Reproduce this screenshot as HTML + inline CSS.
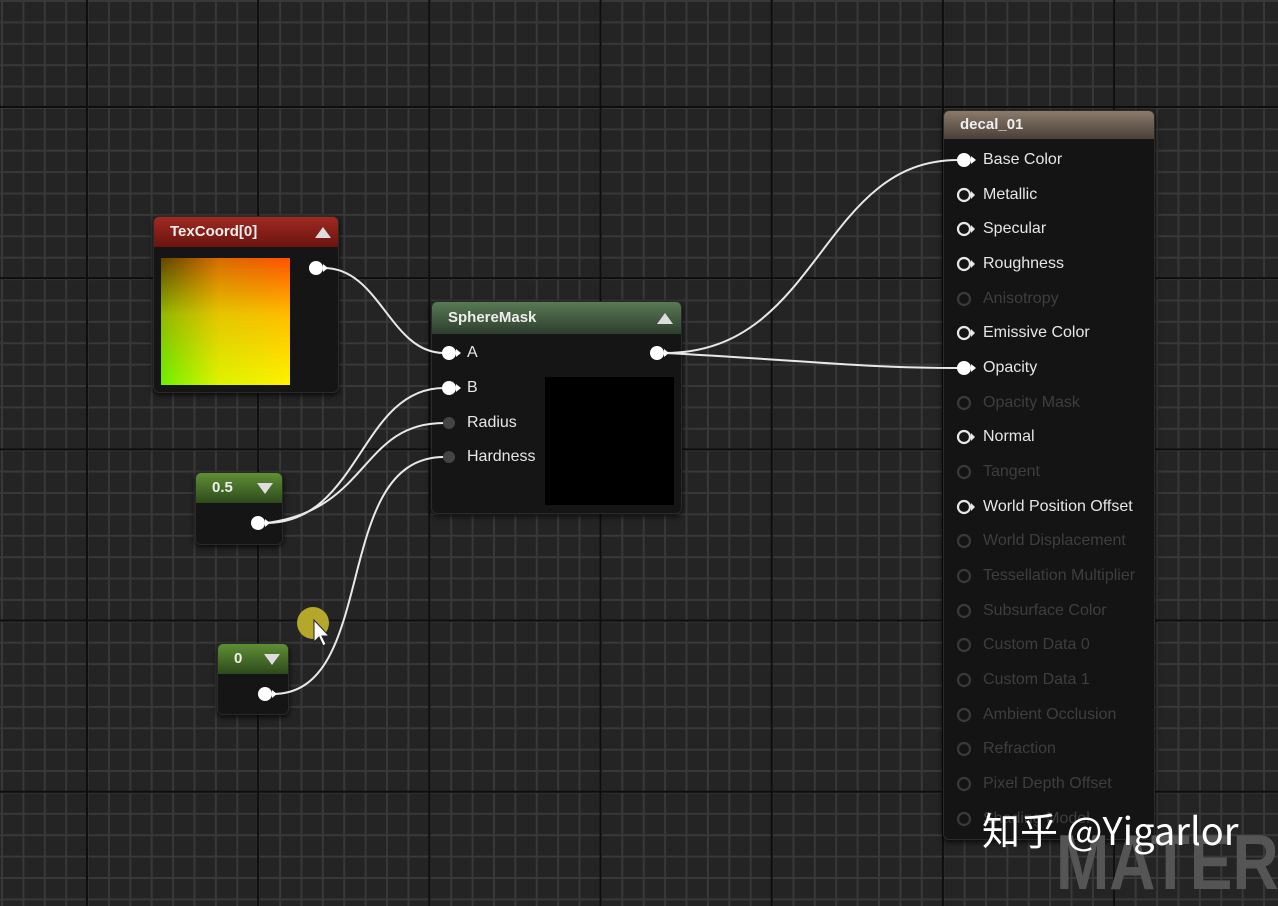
<!DOCTYPE html>
<html><head><meta charset="utf-8"><style>
*{margin:0;padding:0;box-sizing:border-box}
body{width:1278px;height:889px;overflow:hidden;position:relative;font-family:"Liberation Sans","Noto Sans CJK SC",sans-serif;
background-color:#242424;
background-image:
linear-gradient(to right,#0e0e0e 2px,transparent 2px),
linear-gradient(to bottom,#0e0e0e 2px,transparent 2px),
linear-gradient(to right,#383838 2px,transparent 2px),
linear-gradient(to bottom,#383838 2px,transparent 2px);
background-size:171.2px 171.2px,171.2px 171.2px,21.4px 21.4px,21.4px 21.4px;
background-position:86px 0,0 106px,1px 0,0 0px;}
.node{position:absolute;background:#151515;border-radius:6px;box-shadow:0 2px 6px rgba(0,0,0,.8);border:1px solid #2a2a2a}
.hdr{position:absolute;left:0;right:0;top:0;border-radius:5px 5px 0 0;color:#eee;font-weight:bold;font-size:15px;padding-left:16px}
.t{position:absolute;font-size:16px;color:#e6e6e6;line-height:20px;white-space:nowrap}
.d{color:#3e3e3e}
.tri{position:absolute;width:0;height:0;border-left:8px solid transparent;border-right:8px solid transparent}
</style></head><body>

<div class="node" style="left:153px;top:216px;width:186px;height:177px">
 <div class="hdr" style="height:30px;line-height:30px;background:linear-gradient(to bottom,#a02a22,#6a1410)">TexCoord[0]</div>
 <div class="tri" style="left:161px;top:10px;border-bottom:11px solid #ddd"></div>
 <div style="position:absolute;left:7px;top:41px;width:129px;height:127px;background:linear-gradient(to right,#3a1a00 0%,#d04800 45%,#ff2a00 100%),linear-gradient(to bottom,#303000 0%,#70b000 45%,#40f000 100%);background-blend-mode:screen"></div>
</div>

<div class="node" style="left:431px;top:301px;width:251px;height:213px">
 <div class="hdr" style="height:32px;line-height:32px;background:linear-gradient(to bottom,#587a55,#2e3e2d)">SphereMask</div>
 <div class="tri" style="left:225px;top:11px;border-bottom:11px solid #ddd"></div>
 <div style="position:absolute;left:113px;top:75px;width:129px;height:128px;background:#000"></div>
</div>
<div class="t" style="left:467px;top:343px">A</div>
<div class="t" style="left:467px;top:378px">B</div>
<div class="t" style="left:467px;top:413px">Radius</div>
<div class="t" style="left:467px;top:447px">Hardness</div>

<div class="node" style="left:195px;top:472px;width:88px;height:73px">
 <div class="hdr" style="height:30px;line-height:30px;background:linear-gradient(to bottom,#5f8f35,#2e4a1c)">0.5</div>
 <div class="tri" style="left:61px;top:10px;border-top:11px solid #ddd"></div>
</div>
<div class="node" style="left:217px;top:643px;width:72px;height:72px">
 <div class="hdr" style="height:30px;line-height:30px;background:linear-gradient(to bottom,#5f8f35,#2e4a1c)">0</div>
 <div class="tri" style="left:46px;top:10px;border-top:11px solid #ddd"></div>
</div>

<div class="node" style="left:943px;top:110px;width:212px;height:730px;background:#141414">
 <div class="hdr" style="height:28px;line-height:28px;background:linear-gradient(to bottom,#8a7a6a,#4a4038)">decal_01</div>
</div>
<div class="t" style="left:983px;top:150px">Base Color</div>
<div class="t" style="left:983px;top:185px">Metallic</div>
<div class="t" style="left:983px;top:219px">Specular</div>
<div class="t" style="left:983px;top:254px">Roughness</div>
<div class="t d" style="left:983px;top:289px">Anisotropy</div>
<div class="t" style="left:983px;top:323px">Emissive Color</div>
<div class="t" style="left:983px;top:358px">Opacity</div>
<div class="t d" style="left:983px;top:393px">Opacity Mask</div>
<div class="t" style="left:983px;top:427px">Normal</div>
<div class="t d" style="left:983px;top:462px">Tangent</div>
<div class="t" style="left:983px;top:497px">World Position Offset</div>
<div class="t d" style="left:983px;top:531px">World Displacement</div>
<div class="t d" style="left:983px;top:566px">Tessellation Multiplier</div>
<div class="t d" style="left:983px;top:601px">Subsurface Color</div>
<div class="t d" style="left:983px;top:635px">Custom Data 0</div>
<div class="t d" style="left:983px;top:670px">Custom Data 1</div>
<div class="t d" style="left:983px;top:705px">Ambient Occlusion</div>
<div class="t d" style="left:983px;top:739px">Refraction</div>
<div class="t d" style="left:983px;top:774px">Pixel Depth Offset</div>
<div class="t d" style="left:983px;top:809px">Shading Model</div>

<div style="position:absolute;left:1056px;top:822px;font-size:78px;font-weight:bold;color:#555;line-height:80px;white-space:nowrap;transform:scaleX(0.82);transform-origin:left top">MATER</div>

<svg style="position:absolute;left:0;top:0" width="1278" height="889">
<g fill="none" stroke="#e8e8e8" stroke-width="2">
<path d="M324 268 C380 268 390 353 444 353"/>
<path d="M266 523 C360 523 360 388 444 388"/>
<path d="M266 523 C370 510 360 423 444 423"/>
<path d="M273 694 C380 694 330 457 444 457"/>
<path d="M665 353 C820 353 820 160 958 160"/>
<path d="M665 353 C800 360 860 368 958 368"/>
</g>
<g fill="#fff">
<circle cx="316" cy="268" r="7"/><path d="M323 264 l5 4 l-5 4z"/>
<circle cx="449" cy="353" r="7"/><path d="M456 349 l5 4 l-5 4z"/>
<circle cx="449" cy="388" r="7"/><path d="M456 384 l5 4 l-5 4z"/>
<circle cx="657" cy="353" r="7"/><path d="M664 349 l5 4 l-5 4z"/>
<circle cx="258" cy="523" r="7"/><path d="M265 519 l5 4 l-5 4z"/>
<circle cx="265" cy="694" r="7"/><path d="M272 690 l5 4 l-5 4z"/>
<circle cx="964" cy="160" r="7"/><path d="M971 156 l5 4 l-5 4z"/>
<circle cx="964" cy="368" r="7"/><path d="M971 364 l5 4 l-5 4z"/>
</g>
<g fill="#444"><circle cx="449" cy="423" r="6"/><circle cx="449" cy="457" r="6"/></g>
<g fill="none" stroke="#e8e8e8" stroke-width="2.2">
<circle cx="964" cy="195" r="6"/><circle cx="964" cy="229" r="6"/><circle cx="964" cy="264" r="6"/><circle cx="964" cy="333" r="6"/><circle cx="964" cy="437" r="6"/><circle cx="964" cy="507" r="6"/>
</g>
<g fill="#e8e8e8"><path d="M971 191 l4 4 l-4 4z M971 225 l4 4 l-4 4z M971 260 l4 4 l-4 4z M971 329 l4 4 l-4 4z M971 433 l4 4 l-4 4z M971 503 l4 4 l-4 4z"/></g>
<g fill="none" stroke="#3a3a3a" stroke-width="2.2">
<circle cx="964" cy="299" r="6"/><circle cx="964" cy="403" r="6"/><circle cx="964" cy="472" r="6"/><circle cx="964" cy="541" r="6"/><circle cx="964" cy="576" r="6"/><circle cx="964" cy="611" r="6"/><circle cx="964" cy="645" r="6"/><circle cx="964" cy="680" r="6"/><circle cx="964" cy="715" r="6"/><circle cx="964" cy="749" r="6"/><circle cx="964" cy="784" r="6"/><circle cx="964" cy="819" r="6"/>
</g>
<circle cx="313" cy="623" r="16" fill="#b5a72a"/>
<path d="M314 620 L314 642 L319 637 L323 646 L326 644 L322 636 L329 636 Z" fill="#fff" stroke="#222" stroke-width="1"/>
</svg>

<div style="position:absolute;left:982px;top:806px;font-size:38px;color:#fff;line-height:46px;white-space:nowrap;font-family:'Noto Sans CJK SC','Liberation Sans',sans-serif">知乎 @Yigarlor</div>
</body></html>
